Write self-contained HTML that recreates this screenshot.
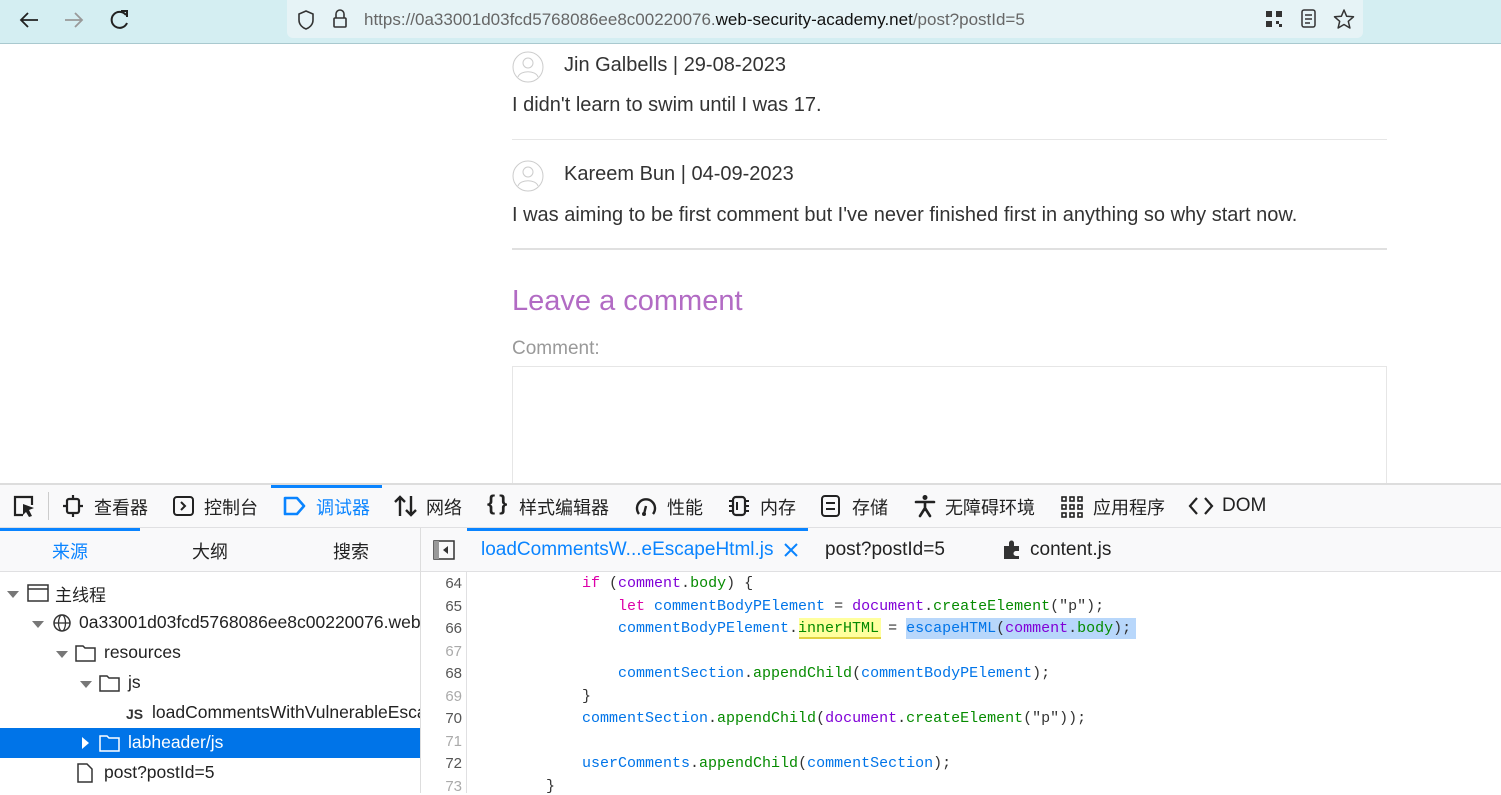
<!DOCTYPE html>
<html><head><meta charset="utf-8"><style>
*{margin:0;padding:0;box-sizing:border-box}
body{width:1501px;height:793px;overflow:hidden;background:#fff;font-family:"Liberation Sans","Noto Sans CJK SC",sans-serif;position:relative;color:#333}
.a{position:absolute;white-space:nowrap}
.cn{font-family:"Noto Sans CJK SC","Liberation Sans",sans-serif}
.code{font-family:"Liberation Mono",monospace;font-size:15px}
.ln{font-family:"Liberation Sans",sans-serif;font-size:15px;color:#555;width:40px;text-align:right}
.k{color:#dd00a9}.v{color:#0074e8}.p{color:#8000d7}.f{color:#058b00}.d{color:#333}
.t{font-size:18px;color:#222;top:494px}
</style></head><body>
<!-- browser bar -->
<div class="a" style="left:0;top:0;width:1501px;height:44px;background:#d4eef2;border-bottom:1px solid #a9c9cf"></div>
<div class="a" style="left:287px;top:0;width:1076px;height:38px;background:#e6f3f6;border-radius:0 0 6px 6px"></div>
<svg class="a" style="left:18px;top:10px" width="22" height="20"><path d="M20 10H3M10 3L3 10L10 17" fill="none" stroke="#222" stroke-width="1.8"/></svg>
<svg class="a" style="left:63px;top:10px" width="22" height="20"><path d="M2 10H19M12 3L19 10L12 17" fill="none" stroke="#999" stroke-width="1.8"/></svg>
<svg class="a" style="left:109px;top:9px" width="22" height="22"><path d="M17 6A8 8 0 1 0 18 14" fill="none" stroke="#222" stroke-width="2"/><path d="M12 2H18V8" fill="none" stroke="#222" stroke-width="2"/></svg>
<svg class="a" style="left:296px;top:9px" width="20" height="22"><path d="M10 2 L17 5 V11 C17 16 13 19 10 20 C7 19 3 16 3 11 V5 Z" fill="none" stroke="#333" stroke-width="1.6"/></svg>
<svg class="a" style="left:331px;top:8px" width="18" height="22"><path d="M5 10 V6 a4 4 0 0 1 8 0 V10" fill="none" stroke="#333" stroke-width="1.6"/><rect x="3" y="10" width="12" height="9" rx="1" fill="none" stroke="#333" stroke-width="1.6"/></svg>
<div class="a" style="left:364px;top:10px;font-size:17px;color:#666">https://0a33001d03fcd5768086ee8c00220076.<span style="color:#111">web-security-academy.net</span>/post?postId=5</div>
<svg class="a" style="left:1265px;top:10px" width="18" height="18"><rect x="1" y="1" width="6" height="6" fill="#333"/><rect x="11" y="1" width="6" height="6" fill="#333"/><rect x="1" y="11" width="6" height="6" fill="#333"/><rect x="11" y="11" width="3" height="3" fill="#333"/><rect x="14" y="14" width="3" height="3" fill="#333"/></svg>
<svg class="a" style="left:1300px;top:9px" width="18" height="20"><rect x="2" y="1" width="13" height="17" rx="2" fill="none" stroke="#333" stroke-width="1.5"/><path d="M5 6h7M5 10h7M5 14h5" stroke="#333" stroke-width="1.5"/></svg>
<svg class="a" style="left:1333px;top:8px" width="22" height="22"><path d="M11 2L13.6 8.2L20.5 8.8L15.3 13.3L16.9 20L11 16.5L5.1 20L6.7 13.3L1.5 8.8L8.4 8.2Z" fill="none" stroke="#333" stroke-width="1.5" stroke-linejoin="round"/></svg>

<!-- page -->
<svg class="a" style="left:512px;top:51px" width="32" height="32"><circle cx="16" cy="16" r="15" fill="#fff" stroke="#ccc"/><circle cx="16" cy="12" r="5" fill="none" stroke="#ccc"/><path d="M6 26 C8 19 24 19 26 26" fill="none" stroke="#ccc"/></svg>
<div class="a" style="left:564px;top:54px;font-size:20px">Jin Galbells | 29-08-2023</div>
<div class="a" style="left:512px;top:94px;font-size:20px">I didn't learn to swim until I was 17.</div>
<div class="a" style="left:512px;top:139px;width:875px;height:1px;background:#e6e6e6"></div>
<svg class="a" style="left:512px;top:160px" width="32" height="32"><circle cx="16" cy="16" r="15" fill="#fff" stroke="#ccc"/><circle cx="16" cy="12" r="5" fill="none" stroke="#ccc"/><path d="M6 26 C8 19 24 19 26 26" fill="none" stroke="#ccc"/></svg>
<div class="a" style="left:564px;top:163px;font-size:20px">Kareem Bun | 04-09-2023</div>
<div class="a" style="left:512px;top:204px;font-size:20px">I was aiming to be first comment but I've never finished first in anything so why start now.</div>
<div class="a" style="left:512px;top:248px;width:875px;height:2px;background:#e0e0e0"></div>
<div class="a" style="left:512px;top:285px;font-size:29px;color:#b26bc4">Leave a comment</div>
<div class="a" style="left:512px;top:338px;font-size:19px;color:#999">Comment:</div>
<div class="a" style="left:512px;top:366px;width:875px;height:130px;border:1px solid #e6e6e6"></div>

<!-- devtools -->
<div class="a" style="left:0;top:483px;width:1501px;height:310px;background:#fff;border-top:2px solid #ddd"></div>
<div class="a" style="left:0;top:485px;width:1501px;height:43px;background:#f9f9fa;border-bottom:1px solid #e0e0e2"></div>
<svg class="a" style="left:11px;top:494px" width="26" height="26"><path d="M12 21H4V3h17v8" fill="none" stroke="#222" stroke-width="2.2"/><path d="M12 10 L23 14 L18 16 L21 22 L18 23 L15 18 L12 21Z" fill="#222"/></svg>
<div class="a" style="left:48px;top:492px;width:1px;height:28px;background:#ccc"></div>
<div class="a" style="left:271px;top:485px;width:111px;height:3px;background:#0a84ff"></div>
<!-- inspector -->
<svg class="a" style="left:62px;top:494px" width="22" height="24"><rect x="5" y="5" width="12" height="14" rx="2" fill="none" stroke="#222" stroke-width="2.2"/><path d="M11 1v4M11 19v4M1 12h4M17 12h4" stroke="#222" stroke-width="2.2"/></svg>
<div class="a cn t" style="left:94px">查看器</div>
<svg class="a" style="left:172px;top:495px" width="24" height="22"><rect x="2" y="2" width="19" height="18" rx="3" fill="none" stroke="#222" stroke-width="2"/><path d="M9 7l4 4l-4 4" fill="none" stroke="#222" stroke-width="2"/></svg>
<div class="a cn t" style="left:204px">控制台</div>
<svg class="a" style="left:283px;top:496px" width="24" height="20"><path d="M2 2H14L21 10L14 18H2Z" fill="none" stroke="#0a84ff" stroke-width="2.6" stroke-linejoin="round"/></svg>
<div class="a cn t" style="left:316px;color:#0a84ff">调试器</div>
<svg class="a" style="left:393px;top:494px" width="26" height="24"><path d="M7 22V3M2 8L7 3L12 8M18 2V21M13 16L18 21L23 16" fill="none" stroke="#222" stroke-width="2.4"/></svg>
<div class="a cn t" style="left:426px">网络</div>
<div class="a" style="left:487px;top:492px;font-size:21px;font-weight:bold;color:#222;letter-spacing:4px">{}</div>
<div class="a cn t" style="left:519px">样式编辑器</div>
<svg class="a" style="left:634px;top:494px" width="24" height="24"><path d="M5 20A9 9 0 1 1 19 20" fill="none" stroke="#222" stroke-width="2.4"/><path d="M12 12L10 20" stroke="#222" stroke-width="2.4"/><circle cx="10" cy="20" r="2" fill="#222"/></svg>
<div class="a cn t" style="left:667px">性能</div>
<svg class="a" style="left:727px;top:494px" width="24" height="24"><rect x="6" y="3" width="12" height="18" rx="3" fill="none" stroke="#222" stroke-width="2.2"/><path d="M2 7h4M2 12h4M2 17h4M18 7h4M18 12h4M18 17h4M10 8v8" stroke="#222" stroke-width="2"/></svg>
<div class="a cn t" style="left:760px">内存</div>
<svg class="a" style="left:820px;top:494px" width="22" height="24"><rect x="2" y="2" width="17" height="20" rx="3" fill="none" stroke="#222" stroke-width="2"/><path d="M6 9h9M6 15h9" stroke="#222" stroke-width="2"/></svg>
<div class="a cn t" style="left:852px">存储</div>
<svg class="a" style="left:913px;top:494px" width="24" height="24"><circle cx="12" cy="3.5" r="2.5" fill="#222"/><path d="M3 8H21M12 8V14M12 14L7 22M12 14L17 22" fill="none" stroke="#222" stroke-width="2.6" stroke-linecap="round"/></svg>
<div class="a cn t" style="left:945px">无障碍环境</div>
<svg class="a" style="left:1061px;top:496px" width="22" height="22"><g fill="none" stroke="#222" stroke-width="1.6"><rect x="1" y="1" width="4" height="4"/><rect x="9" y="1" width="4" height="4"/><rect x="17" y="1" width="4" height="4"/><rect x="1" y="9" width="4" height="4"/><rect x="9" y="9" width="4" height="4"/><rect x="17" y="9" width="4" height="4"/><rect x="1" y="17" width="4" height="4"/><rect x="9" y="17" width="4" height="4"/><rect x="17" y="17" width="4" height="4"/></g></svg>
<div class="a cn t" style="left:1093px">应用程序</div>
<svg class="a" style="left:1188px;top:495px" width="26" height="22"><path d="M9 3L2 11L9 19M17 3L24 11L17 19" fill="none" stroke="#222" stroke-width="2.2"/></svg>
<div class="a" style="left:1222px;top:495px;font-size:19px;color:#222">DOM</div>

<!-- second row -->
<div class="a" style="left:0;top:528px;width:1501px;height:44px;background:#f9f9fa;border-bottom:1px solid #e0e0e2"></div>
<div class="a" style="left:0;top:528px;width:140px;height:3px;background:#0a84ff"></div>
<div class="a" style="left:467px;top:528px;width:341px;height:3px;background:#0a84ff"></div>
<div class="a" style="left:420px;top:528px;width:1px;height:265px;background:#ddd"></div>
<div class="a cn" style="left:52px;top:538px;font-size:18px;color:#0a84ff">来源</div>
<div class="a cn" style="left:192px;top:538px;font-size:18px;color:#222">大纲</div>
<div class="a cn" style="left:333px;top:538px;font-size:18px;color:#222">搜索</div>
<svg class="a" style="left:433px;top:540px" width="22" height="20"><rect x="1" y="1" width="20" height="18" fill="none" stroke="#333" stroke-width="1.5"/><rect x="1" y="1" width="5" height="18" fill="#999"/><path d="M15 6L10 10L15 14Z" fill="#333"/></svg>
<div class="a" style="left:481px;top:539px;font-size:19px;color:#0a84ff">loadCommentsW...eEscapeHtml.js</div>
<svg class="a" style="left:783px;top:542px" width="16" height="16"><path d="M2 2L14 14M14 2L2 14" stroke="#0a84ff" stroke-width="2"/></svg>
<div class="a" style="left:825px;top:539px;font-size:19px;color:#222">post?postId=5</div>
<svg class="a" style="left:1002px;top:539px" width="22" height="22"><path d="M2 7H7V4a2.5 2.5 0 0 1 5 0V7H17V12H14a2.5 2.5 0 0 0 0 5H17V20H2Z" fill="#333"/></svg>
<div class="a" style="left:1030px;top:539px;font-size:19px;color:#222">content.js</div>

<!-- tree -->
<div class="a" style="left:0;top:728px;width:420px;height:30px;background:#0074e8"></div>
<svg class="a" style="left:6px;top:590px" width="14" height="10"><path d="M1 1H13L7 8Z" fill="#777"/></svg>
<svg class="a" style="left:27px;top:584px" width="22" height="18"><rect x="1" y="1" width="20" height="16" fill="none" stroke="#333" stroke-width="1.5"/><path d="M1 5h20" stroke="#333" stroke-width="1.5"/></svg>
<div class="a cn" style="left:55px;top:581px;font-size:17px;color:#222">主线程</div>
<svg class="a" style="left:31px;top:620px" width="14" height="10"><path d="M1 1H13L7 8Z" fill="#777"/></svg>
<svg class="a" style="left:52px;top:613px" width="20" height="20"><circle cx="10" cy="10" r="8" fill="none" stroke="#333" stroke-width="1.5"/><ellipse cx="10" cy="10" rx="3.5" ry="8" fill="none" stroke="#333" stroke-width="1.3"/><path d="M2 10h16" stroke="#333" stroke-width="1.3"/></svg>
<div class="a" style="left:79px;top:612px;font-size:17.5px;color:#222;width:341px;overflow:hidden">0a33001d03fcd5768086ee8c00220076.web-security-academy.net</div>
<svg class="a" style="left:55px;top:650px" width="14" height="10"><path d="M1 1H13L7 8Z" fill="#777"/></svg>
<svg class="a" style="left:75px;top:644px" width="22" height="18"><path d="M1 2h7l2 2h10v13H1Z" fill="none" stroke="#333" stroke-width="1.5"/></svg>
<div class="a" style="left:104px;top:642px;font-size:17.5px;color:#222">resources</div>
<svg class="a" style="left:79px;top:680px" width="14" height="10"><path d="M1 1H13L7 8Z" fill="#777"/></svg>
<svg class="a" style="left:99px;top:674px" width="22" height="18"><path d="M1 2h7l2 2h10v13H1Z" fill="none" stroke="#333" stroke-width="1.5"/></svg>
<div class="a" style="left:128px;top:672px;font-size:17.5px;color:#222">js</div>
<div class="a" style="left:126px;top:706px;font-size:14px;font-weight:bold;color:#333">JS</div>
<div class="a" style="left:152px;top:702px;font-size:17.5px;color:#222;width:268px;overflow:hidden">loadCommentsWithVulnerableEscapeHtml.js</div>
<svg class="a" style="left:81px;top:736px" width="10" height="14"><path d="M1 1V13L8 7Z" fill="#fff"/></svg>
<svg class="a" style="left:99px;top:734px" width="22" height="18"><path d="M1 2h7l2 2h10v13H1Z" fill="none" stroke="#fff" stroke-width="1.5"/></svg>
<div class="a" style="left:128px;top:732px;font-size:17.5px;color:#fff">labheader/js</div>
<svg class="a" style="left:77px;top:763px" width="16" height="20"><path d="M1 1h9l5 5v13H1Z" fill="none" stroke="#333" stroke-width="1.5"/></svg>
<div class="a" style="left:104px;top:762px;font-size:17.5px;color:#222">post?postId=5</div>

<!-- code -->
<div class="a" style="left:466px;top:572px;width:1px;height:221px;background:#e0e0e2"></div>
<div class="a" style="left:799px;top:618px;width:82px;height:21px;background:#ffff9e;border-bottom:2px solid #e0d040"></div>
<div class="a" style="left:906px;top:618px;width:230px;height:21px;background:#b8d7fb"></div>
<div class="a ln" style="left:422px;top:575px">64</div>
<div class="a ln" style="left:422px;top:598px">65</div>
<div class="a ln" style="left:422px;top:620px">66</div>
<div class="a ln" style="left:422px;top:643px;color:#aaa">67</div>
<div class="a ln" style="left:422px;top:665px">68</div>
<div class="a ln" style="left:422px;top:688px;color:#aaa">69</div>
<div class="a ln" style="left:422px;top:710px">70</div>
<div class="a ln" style="left:422px;top:733px;color:#aaa">71</div>
<div class="a ln" style="left:422px;top:755px">72</div>
<div class="a ln" style="left:422px;top:778px;color:#aaa">73</div>
<div class="a code" style="left:582px;top:575px"><span class="k">if</span> (<span class="p">comment</span>.<span class="f">body</span>) {</div>
<div class="a code" style="left:618px;top:598px"><span class="k">let</span> <span class="v">commentBodyPElement</span> = <span class="p">document</span>.<span class="f">createElement</span>("p");</div>
<div class="a code" style="left:618px;top:620px"><span class="v">commentBodyPElement</span>.<span class="f">innerHTML</span> = <span class="v">escapeHTML</span>(<span class="p">comment</span>.<span class="f">body</span>);</div>
<div class="a code" style="left:618px;top:665px"><span class="v">commentSection</span>.<span class="f">appendChild</span>(<span class="v">commentBodyPElement</span>);</div>
<div class="a code" style="left:582px;top:688px">}</div>
<div class="a code" style="left:582px;top:710px"><span class="v">commentSection</span>.<span class="f">appendChild</span>(<span class="p">document</span>.<span class="f">createElement</span>("p"));</div>
<div class="a code" style="left:582px;top:755px"><span class="v">userComments</span>.<span class="f">appendChild</span>(<span class="v">commentSection</span>);</div>
<div class="a code" style="left:546px;top:778px">}</div>
</body></html>
